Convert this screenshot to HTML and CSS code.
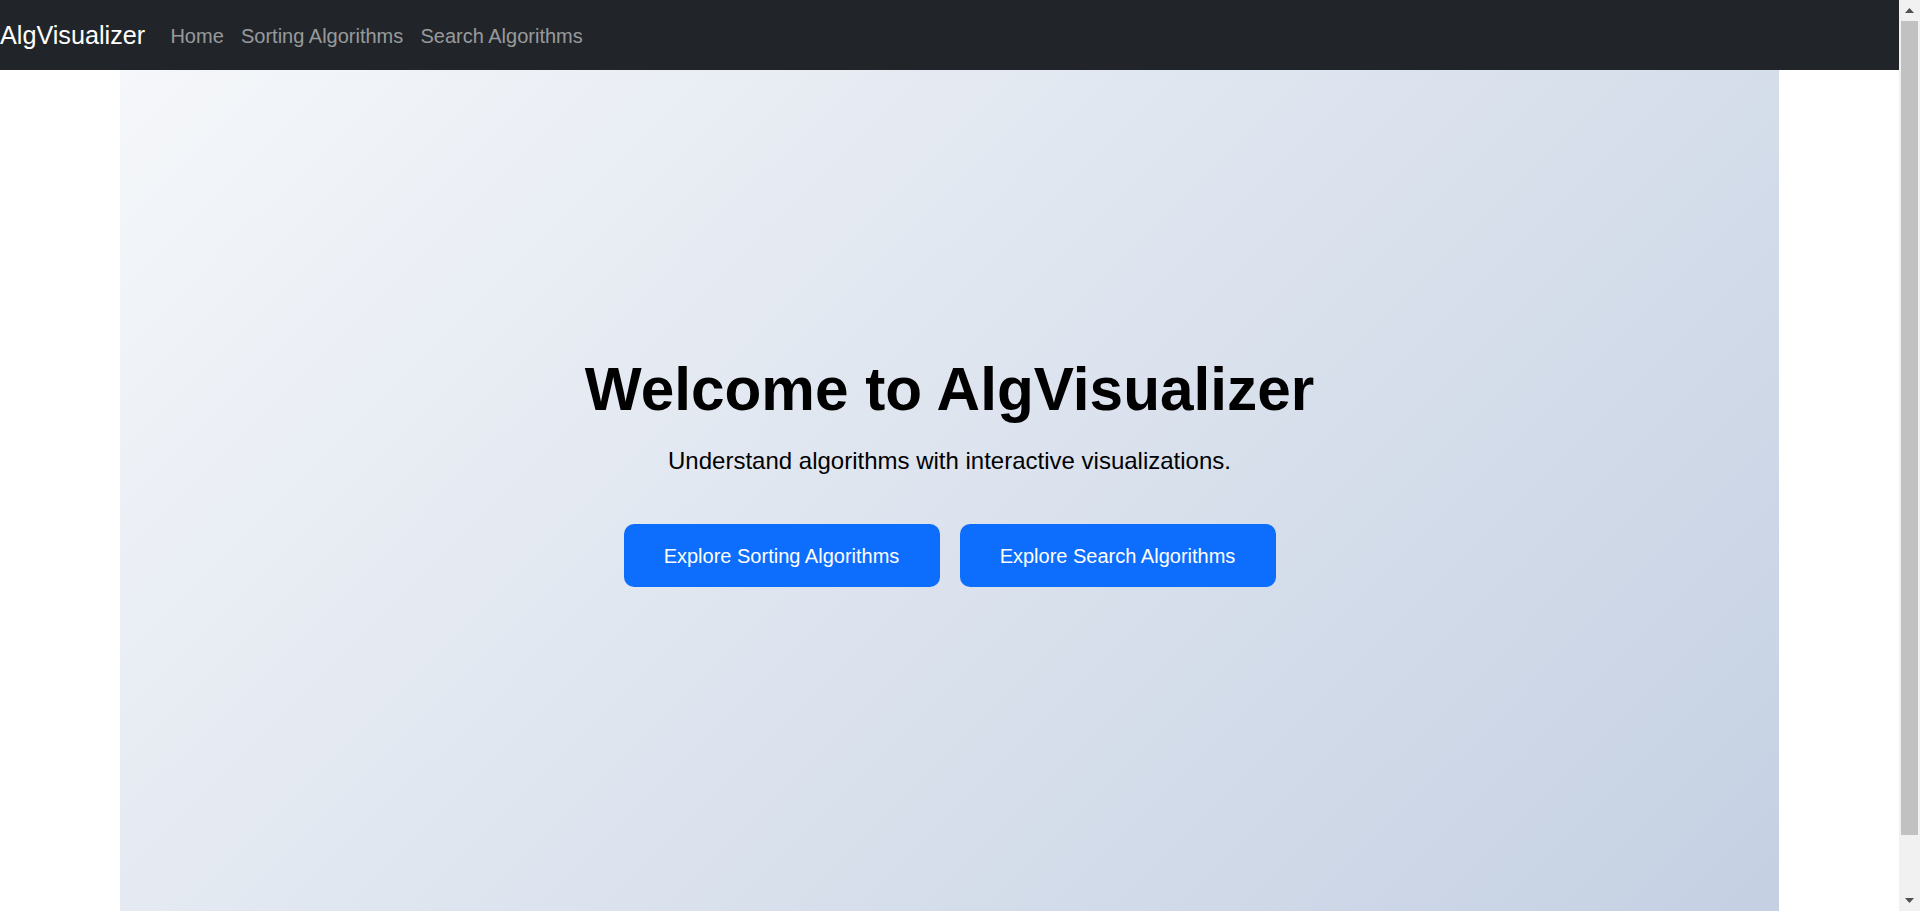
FILE: index.html
```html
<!DOCTYPE html>
<html lang="en">
<head>
<meta charset="utf-8">
<title>AlgVisualizer</title>
<link rel="stylesheet" href="styles.css">
</head>
<body>
<div class="page">
  <nav class="navbar">
    <a class="brand" href="#">AlgVisualizer</a>
    <ul class="nav-links">
      <li><a href="#">Home</a></li>
      <li><a href="#">Sorting Algorithms</a></li>
      <li><a href="#">Search Algorithms</a></li>
    </ul>
  </nav>
  <main class="hero">
    <h1 class="hero-title">Welcome to AlgVisualizer</h1>
    <p class="hero-lead">Understand algorithms with interactive visualizations.</p>
    <div class="hero-actions">
      <a class="btn" href="#">Explore Sorting Algorithms</a>
      <a class="btn" href="#">Explore Search Algorithms</a>
    </div>
  </main>
</div>
<div class="scrollbar" aria-hidden="true">
  <div class="sb-btn"><svg width="9" height="5" viewBox="0 0 9 5"><path d="M0 5 L4.5 0 L9 5 Z" fill="#505050"/></svg></div>
  <div class="sb-thumb"></div>
  <div class="sb-track"></div>
  <div class="sb-btn"><svg width="9" height="5" viewBox="0 0 9 5"><path d="M0 0 L9 0 L4.5 5 Z" fill="#505050"/></svg></div>
</div>
</body>
</html>
```
FILE: styles.css
```css
* { box-sizing: border-box; }
html, body { margin: 0; padding: 0; height: 100%; }
body {
  display: flex;
  overflow: hidden;
  font-family: "Liberation Sans", Arial, sans-serif;
  color: #000;
  background: #fff;
}
.page {
  flex: 1;
  height: 911px;
  overflow: hidden;
}
.navbar {
  height: 70px;
  padding-top: 1px;
  background: #212529;
  display: flex;
  align-items: center;
}
.brand {
  color: #fff;
  text-decoration: none;
  font-size: 25.2px;
  line-height: 1.5;
  margin-right: 16.7px;
}
.nav-links {
  list-style: none;
  margin: 0;
  padding: 0;
  display: flex;
}
.nav-links a {
  display: block;
  padding: 0 8.6px;
  color: rgba(255,255,255,0.55);
  text-decoration: none;
  font-size: 20px;
  line-height: 1.5;
}
.hero {
  width: 1659px;
  height: 911px;
  margin: 0 auto;
  padding-top: 283px;
  background: linear-gradient(135deg, #f5f7fa 0%, #c3cfe2 100%);
  text-align: center;
}
.hero-title {
  margin: 0 0 18px;
  font-size: 60.3px;
  line-height: 1.2;
  font-weight: 700;
}
.hero-lead {
  margin: 0 0 45px;
  font-size: 24px;
  line-height: 1.5;
}
.hero-actions {
  display: flex;
  justify-content: center;
  gap: 20px;
}
.btn {
  display: inline-block;
  width: 316px;
  height: 63px;
  padding: 16.5px 0;
  background: #0d6efd;
  color: #fff;
  text-decoration: none;
  font-size: 20px;
  line-height: 1.5;
  border-radius: 10px;
  text-align: center;
}
.scrollbar {
  width: 21px;
  height: 911px;
  background: #f1f1f1;
  display: flex;
  flex-direction: column;
}
.sb-btn {
  height: 21px;
  display: flex;
  align-items: center;
  justify-content: center;
}
.sb-thumb {
  height: 814px;
  margin: 0 2px;
  background: #c1c1c1;
}
.sb-track { flex: 1; }
```
